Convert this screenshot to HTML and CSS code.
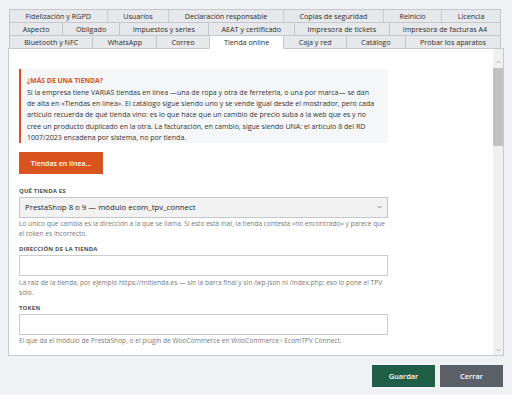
FILE: index.html
```html
<!DOCTYPE html>
<html lang="es">
<head>
<meta charset="utf-8">
<title>Ajustes — Tienda online</title>
<link rel="stylesheet" href="styles.css">
</head>
<body>
<div class="app">
  <div class="tabs">
    <div class="tab-row">
      <div class="tab">Fidelización y RGPD</div>
      <div class="tab">Usuarios</div>
      <div class="tab">Declaración responsable</div>
      <div class="tab">Copias de seguridad</div>
      <div class="tab">Reinicio</div>
      <div class="tab">Licencia</div>
    </div>
    <div class="tab-row">
      <div class="tab">Aspecto</div>
      <div class="tab">Obligado</div>
      <div class="tab">Impuestos y series</div>
      <div class="tab">AEAT y certificado</div>
      <div class="tab">Impresora de tickets</div>
      <div class="tab">Impresora de facturas A4</div>
    </div>
    <div class="tab-row">
      <div class="tab">Bluetooth y NFC</div>
      <div class="tab">WhatsApp</div>
      <div class="tab">Correo</div>
      <div class="tab active">Tienda online</div>
      <div class="tab">Caja y red</div>
      <div class="tab">Catálogo</div>
      <div class="tab">Probar los aparatos</div>
    </div>
  </div>

  <div class="panel">
    <div class="panel-body">
      <div class="content">
        <div class="callout">
          <div class="callout-title">¿Más de una tienda?</div>
          <p class="callout-text">Si la empresa tiene VARIAS tiendas en línea —una de ropa y otra de ferretería, o una por marca— se dan de&nbsp;alta en «Tiendas en línea». El catálogo sigue siendo uno y se vende igual desde el mostrador, pero cada artículo recuerda de qué tienda vino: es lo que hace que un cambio de precio suba a la web que es y no cree&nbsp;un producto duplicado en la otra. La facturación, en cambio, sigue siendo UNA: el artículo 8 del RD 1007/2023 encadena por sistema, no por tienda.</p>
        </div>

        <button class="btn btn-accent" type="button">Tiendas en línea...</button>

        <div class="field">
          <div class="field-label">Qué tienda es</div>
          <div class="select">
            <span>PrestaShop 8 o 9 — módulo ecom_tpv_connect</span>
            <svg class="chev" width="5" height="4" viewBox="0 0 5 4"><path d="M0.5 1 L2.5 3 L4.5 1" fill="none" stroke="#777" stroke-width="0.8"/></svg>
          </div>
          <p class="hint">Lo único que cambia es la dirección a la que se llama. Si esto está mal, la tienda contesta «no encontrado» y parece que el token es incorrecto.</p>
        </div>

        <div class="field">
          <div class="field-label">Dirección de la tienda</div>
          <input class="input" type="text">
          <p class="hint">La raíz de la tienda, por ejemplo https://mitienda.es — sin la barra final y sin /wp-json ni /index.php: eso lo pone el TPV solo.</p>
        </div>

        <div class="field">
          <div class="field-label">Token</div>
          <input class="input" type="text">
          <p class="hint">El que da el módulo de PrestaShop, o el plugin de WooCommerce en WooCommerce › EcomTPV Connect.</p>
        </div>
      </div>
    </div>
    <div class="scrollbar">
      <div class="sb-arrow sb-up"><svg width="5" height="4" viewBox="0 0 5 4"><path d="M0.5 3 L2.5 1 L4.5 3" fill="none" stroke="#a6a6a6" stroke-width="0.8"/></svg></div>
      <div class="sb-thumb"></div>
      <div class="sb-space"></div>
      <div class="sb-arrow sb-down"><svg width="5" height="4" viewBox="0 0 5 4"><path d="M0.5 1 L2.5 3 L4.5 1" fill="none" stroke="#a6a6a6" stroke-width="0.8"/></svg></div>
    </div>
  </div>

  <div class="actions">
    <button class="btn btn-save" type="button">Guardar</button>
    <button class="btn btn-close" type="button">Cerrar</button>
  </div>
</div>
</body>
</html>
```

FILE: styles.css
```css
* {
  box-sizing: border-box;
}

html,
body {
  margin: 0;
  background: #ffffff;
}

body {
  font-family: "Open Sans", "Noto Sans", sans-serif;
  color: #333333;
}

.app {
  width: 512px;
  height: 395px;
  background: #eff1f4;
  padding: 9px 8px 0 8px;
  display: flex;
  flex-direction: column;
}

/* ---- multi-row tab strip ---- */
.tabs {
  margin: 0 3px 0 1px;
}

.tab-row {
  display: flex;
  height: 14px;
  padding-left: 1px;
}

.tab-row + .tab-row {
  margin-top: -1px;
}

.tab {
  flex: 1 1 auto;
  margin-left: -1px;
  padding: 0 6px;
  border: 1px solid #c4c7cb;
  background: #e6e8eb;
  font-size: 7.2px;
  line-height: 12px;
  text-align: center;
  white-space: nowrap;
  color: #2d2d2d;
}

.tab.active {
  background: #ffffff;
  border-bottom-color: #ffffff;
  position: relative;
  z-index: 1;
}

/* ---- page panel ---- */
.panel {
  height: 308px;
  margin-top: -1px;
  border: 1px solid #c6cace;
  background: #ffffff;
  display: flex;
}

.panel-body {
  flex: 1;
  overflow: hidden;
  padding: 20px 0 0 10px;
}

.content {
  width: 369px;
}

.callout {
  background: #f5f6f8;
  border-left: 2.5px solid #d9531e;
  padding: 7px 2px 0 6px;
}

.callout-title {
  color: #d9531e;
  font-size: 6.8px;
  font-weight: 700;
  text-transform: uppercase;
  line-height: 9px;
  margin-bottom: 2px;
}

.callout-text {
  margin: 0;
  font-size: 7.05px;
  line-height: 11.2px;
  color: #333333;
}

.btn {
  border: 0;
  font-family: inherit;
  font-weight: 600;
  color: #ffffff;
  height: 22px;
  padding: 0;
  cursor: pointer;
}

.btn-accent {
  display: block;
  width: 84px;
  margin-top: 9px;
  background: #d9531e;
  font-size: 7px;
}

.field-label {
  margin-top: 12.5px;
  margin-bottom: 2px;
  font-size: 6px;
  line-height: 8px;
  font-weight: 700;
  text-transform: uppercase;
  letter-spacing: 0.15px;
  color: #505050;
}

.field + .field .field-label {
  margin-top: 6px;
}

.select {
  height: 21px;
  border: 1px solid #c3c7cc;
  background: #f2f2f3;
  display: flex;
  align-items: center;
  justify-content: space-between;
  padding: 0 5px 0 5px;
  font-size: 7.8px;
  color: #222222;
}

.chev {
  display: block;
}

.input {
  display: block;
  width: 100%;
  height: 21px;
  margin: 0;
  border: 1px solid #c8ccd1;
  background: #ffffff;
  border-radius: 0;
  outline: none;
}

.hint {
  margin: 1.5px 0 0 0;
  font-size: 6.6px;
  line-height: 10px;
  color: #787878;
}

/* ---- scrollbar ---- */
.scrollbar {
  width: 10px;
  background: #f0f0f0;
  display: flex;
  flex-direction: column;
  align-items: stretch;
}

.sb-arrow {
  height: 18px;
  display: flex;
  justify-content: center;
}

.sb-up {
  align-items: flex-end;
  padding-bottom: 3px;
}

.sb-down {
  align-items: flex-end;
  padding-bottom: 3px;
}

.sb-thumb {
  height: 78px;
  margin: 1px 0 0 0;
  background: #c2c2c2;
}

.sb-space {
  flex: 1;
}

/* ---- footer buttons ---- */
.actions {
  display: flex;
  justify-content: flex-end;
  gap: 5px;
  margin: 9px 1px 0 0;
}

.btn-save,
.btn-close {
  width: 63px;
  font-size: 7.4px;
}

.btn-save {
  background: #1e5e46;
}

.btn-close {
  background: #5c6068;
}
```
